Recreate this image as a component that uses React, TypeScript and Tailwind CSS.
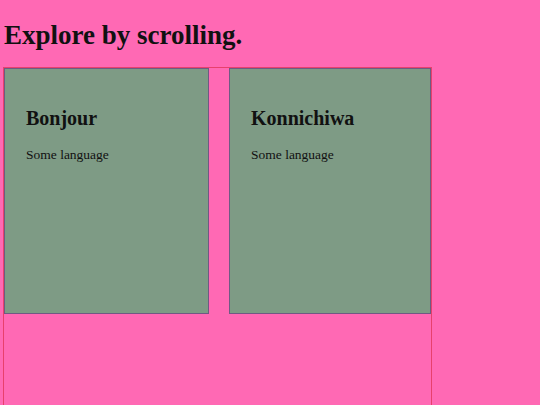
import React from 'react';

/* ─── Language card ─────────────────────────────────────────── */

const LangCard: React.FC<{ title: string; note: string; width: string }> = ({ title, note, width }) => (
    <div className={`${width} h-[246px] shrink-0 border border-[#6f5a83] bg-[#7e9b85] pl-[21px] pt-[38px]`}>
        <h2 className="text-[20px] leading-[23px] font-bold">{title}</h2>
        <p className="mt-[17px] text-[13.5px] leading-[15px]">{note}</p>
    </div>
);

export default function App() {
    return (
        <div className="min-h-screen overflow-hidden bg-[#ff69b4] pl-[3px] font-['Liberation_Serif',serif] text-[#111]">
            <h1 className="pt-[20px] pl-[1px] text-[27px] leading-[31px] font-bold">Explore by scrolling.</h1>

            {/* Scroll strip */}
            <div className="mt-[16px] flex h-[420px] w-[429px] gap-[20px] overflow-hidden border border-[#e8406c]">
                <LangCard title="Bonjour" note="Some language" width="w-[205px]" />
                <LangCard title="Konnichiwa" note="Some language" width="w-[202px]" />
            </div>
        </div>
    );
}
